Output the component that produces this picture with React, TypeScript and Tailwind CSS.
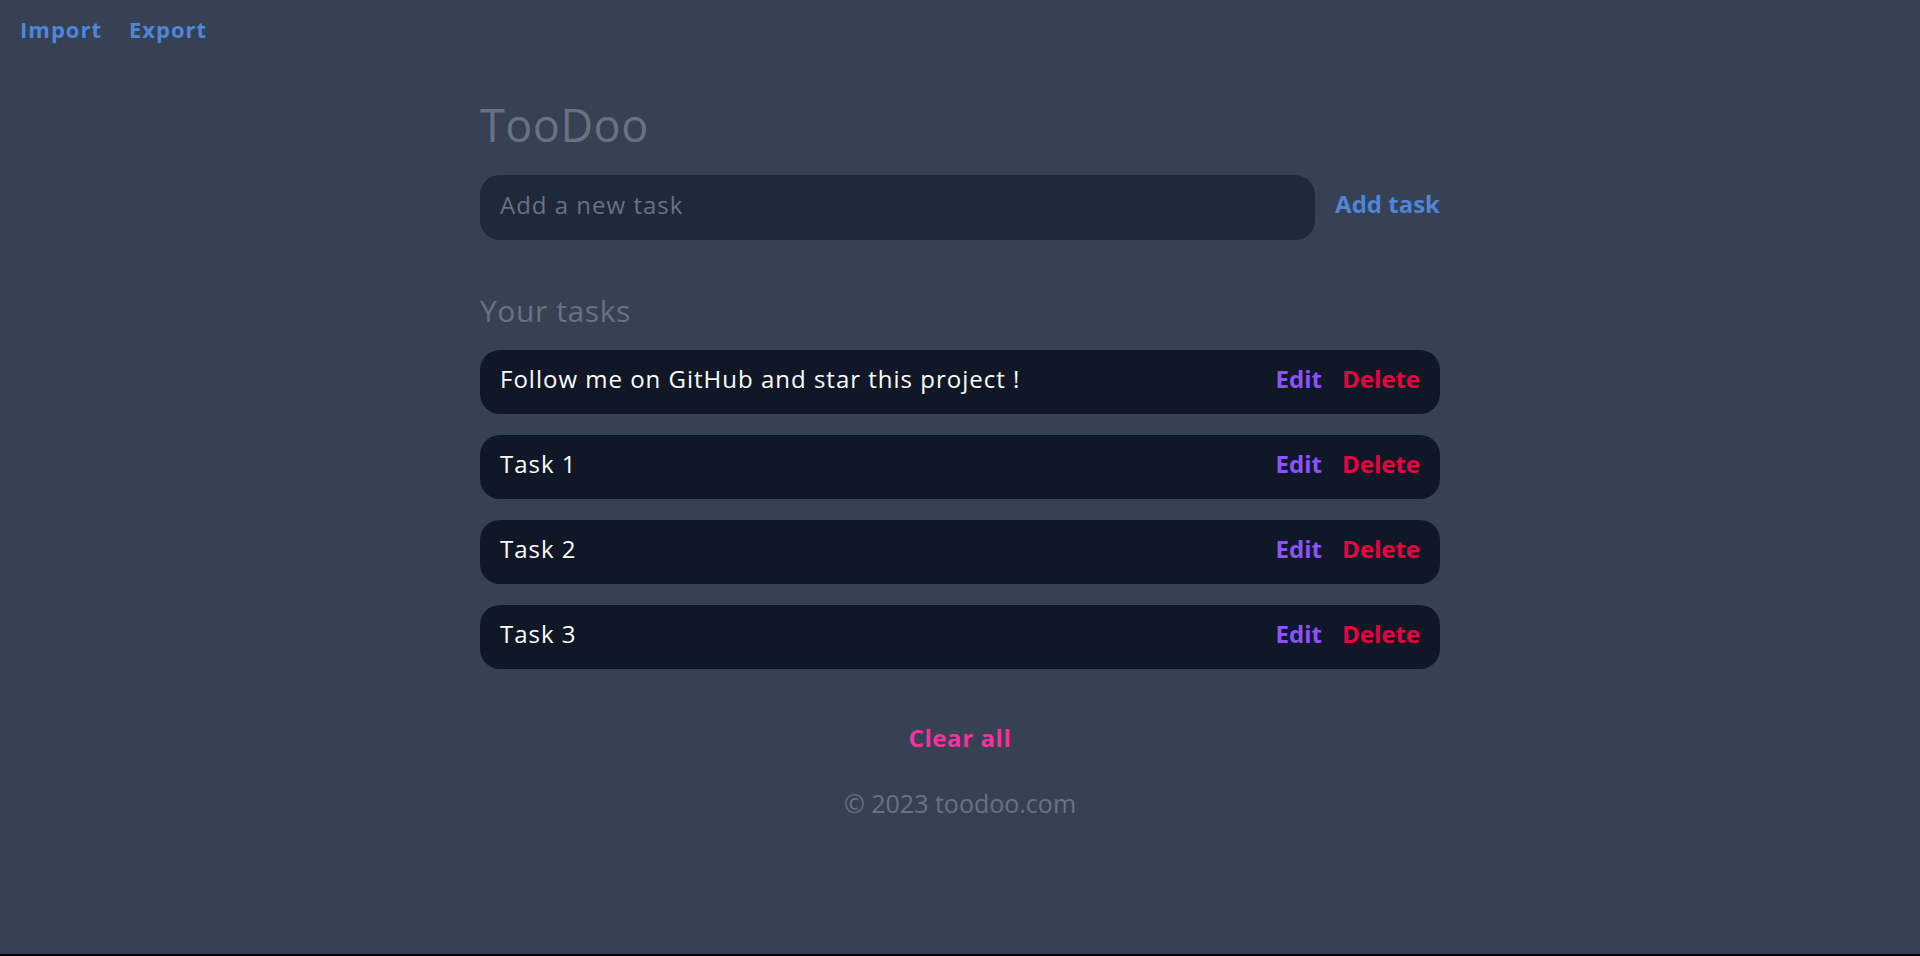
const tasks = ['Follow me on GitHub and star this project !', 'Task 1', 'Task 2', 'Task 3']

const App = () => {
  return (
    <div className="bg-black h-screen">
      <div className="h-[954px] bg-gray-700 font-['Open_Sans',sans-serif]">
        <nav className="flex gap-[27px] px-5 pt-[13px]">
          <button className="text-[22px] font-bold tracking-[1px] text-[#4f86d9]">Import</button>
          <button className="text-[22px] font-bold tracking-[1px] text-[#4f86d9]">Export</button>
        </nav>

        <main className="w-[960px] mx-auto mt-[56px]">
          <h1 className="text-[45px] text-gray-500 leading-none tracking-[0.5px]">TooDoo</h1>

          <div className="flex items-center gap-5 mt-[28px]">
            <input
              type="text"
              placeholder="Add a new task"
              className="flex-1 h-[65px] rounded-[20px] bg-gray-800 px-5 pb-[7px] text-2xl tracking-[1px] text-white placeholder:text-gray-500 outline-none"
            />
            <button className="text-2xl font-bold text-[#4f86d9] pb-[7px]">Add task</button>
          </div>

          <h2 className="text-[30px] text-gray-500 mt-[56px] leading-none tracking-[0.6px]">Your tasks</h2>

          <ul className="flex flex-col gap-[21px] mt-[24px]">
            {tasks.map((t) => (
              <li
                key={t}
                className="flex items-center justify-between h-[64px] rounded-[20px] bg-gray-900 pl-5 pr-5 pb-[6px]"
              >
                <span className="text-2xl text-white tracking-[1px]">{t}</span>
                <div className="flex gap-5">
                  <button className="text-2xl font-bold text-violet-500">Edit</button>
                  <button className="text-2xl font-bold text-rose-600">Delete</button>
                </div>
              </li>
            ))}
          </ul>

          <div className="flex flex-col items-center mt-[53px]">
            <button className="text-2xl font-bold tracking-[0.6px] text-pink-500">Clear all</button>
            <p className="text-[25px] text-gray-500 mt-[31px]">© 2023 toodoo.com</p>
          </div>
        </main>
      </div>
    </div>
  )
}

export default App
